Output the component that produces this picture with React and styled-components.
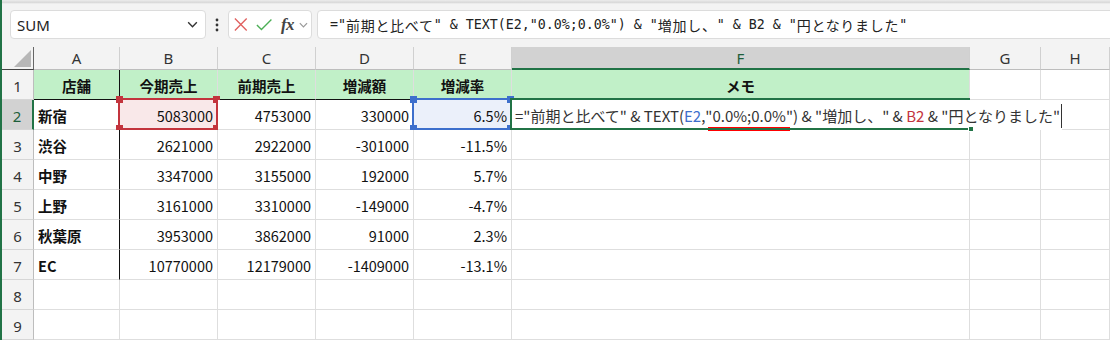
import React from 'react';
import styled, { createGlobalStyle } from 'styled-components';

const GlobalStyle = createGlobalStyle`
  html, body {
    margin: 0;
    padding: 0;
    background: #f3f3f3;
    overflow: hidden;
  }
  * { box-sizing: border-box; }
`;

const XL_GREEN = '#217346';
const CELL_FONT = `"Noto Sans CJK JP", "Noto Sans", sans-serif`;

const Window = styled.div`
  width: 1110px;
  height: 340px;
  border-left: 2px solid ${XL_GREEN};
  background: #f3f3f3;
  display: flex;
  flex-direction: column;
  overflow: hidden;
`;

const TopShade = styled.div`
  height: 4px;
  background: linear-gradient(#ececec, #d9d9d9 60%, #f3f3f3);
`;

const Toolbar = styled.div`
  height: 43px;
  display: flex;
  align-items: flex-start;
  padding: 6px 0 0 8px;
`;

const Box = styled.div`
  height: 29px;
  background: #ffffff;
  border: 1px solid #dcdcdc;
  border-radius: 4px;
  display: flex;
  align-items: center;
`;

const NameBox = styled(Box)`
  width: 196px;
  padding: 0 6px 0 6px;
  justify-content: space-between;
  font-family: "Noto Sans", "Liberation Sans", sans-serif;
  font-size: 15px;
  color: #222;
`;

const Dots = styled.div`
  width: 22px;
  height: 29px;
  display: flex;
  align-items: center;
  justify-content: center;
`;

const FuncBox = styled(Box)`
  width: 84px;
  padding: 0 2px 0 5px;
  gap: 8px;
`;

const Fx = styled.span`
  font-family: "Liberation Serif", "DejaVu Serif", serif;
  font-style: italic;
  font-weight: bold;
  font-size: 17px;
  color: #444;
  margin-left: 1px;
  margin-right: -4px;
  letter-spacing: -0.5px;
`;

const FormulaBox = styled(Box)`
  flex: 1;
  margin-left: 5px;
  margin-right: -8px;
  padding-left: 12px;
  font-family: "DejaVu Sans Mono", "Liberation Mono", "Noto Sans CJK JP", monospace;
  font-size: 13.3px;
  color: #222;
  white-space: nowrap;
`;

const Wide = styled.span`
  font-family: "Noto Sans CJK JP", sans-serif;
  font-size: 14px;
  letter-spacing: 0.7px;
`;

const Sheet = styled.div`
  display: grid;
  grid-template-columns: 32px 86px 98px 98px 98px 98px 458px 71px 1fr;
  grid-template-rows: 23px repeat(9, 30px);
  background: #ffffff;
  font-family: ${CELL_FONT};
  font-size: 14.5px;
  color: #111;
`;

const Corner = styled.div`
  background: #f3f3f3;
  border-right: 1px solid #666;
  border-bottom: 1px solid #444;
  position: relative;
`;

const Triangle = styled.div`
  position: absolute;
  right: 2px;
  bottom: 2px;
  width: 0;
  height: 0;
  border-left: 17px solid transparent;
  border-bottom: 17px solid #b7b7b7;
`;

const ColHead = styled.div`
  background: ${(p) => (p.$active ? '#d2d2d2' : '#f3f3f3')};
  color: ${(p) => (p.$active ? '#1d5e3a' : '#333')};
  border-right: 1px solid #d0d0d0;
  border-bottom: ${(p) => (p.$active ? `2px solid ${XL_GREEN}` : '1px solid #bdbdbd')};
  display: flex;
  align-items: center;
  justify-content: center;
  font-family: "Noto Sans", "Liberation Sans", sans-serif;
  font-size: 15px;
  padding-top: ${(p) => (p.$active ? '1px' : '0')};
`;

const RowHead = styled.div`
  background: ${(p) => (p.$active ? '#d2d2d2' : '#f3f3f3')};
  color: ${(p) => (p.$active ? '#1d5e3a' : '#333')};
  border-right: ${(p) => (p.$active ? `2px solid ${XL_GREEN}` : '1px solid #bdbdbd')};
  border-bottom: 1px solid #d6d6d6;
  display: flex;
  align-items: center;
  justify-content: center;
  font-family: "Noto Sans", "Liberation Sans", sans-serif;
  font-size: 15px;
  padding-top: 2px;
`;

const Cell = styled.div`
  position: relative;
  background: ${(p) => p.$fill || '#ffffff'};
  border-right: 1px solid ${(p) => (p.$edgeRight ? '#111' : '#dedede')};
  border-bottom: 1px solid ${(p) => (p.$edgeBottom ? '#111' : '#dedede')};
  display: flex;
  align-items: center;
  justify-content: ${(p) => p.$align || 'flex-start'};
  padding: 1px 4px 0 4px;
  font-weight: ${(p) => (p.$bold ? 700 : 400)};
  white-space: nowrap;
  z-index: ${(p) => (p.$raised ? 2 : 'auto')};
`;

const RefFrame = styled.div`
  position: absolute;
  left: -2px;
  top: -2px;
  right: -1px;
  bottom: -1px;
  border: 2px solid ${(p) => p.$color};
  background: ${(p) => p.$fill};
  pointer-events: none;
`;

const Handle = styled.span`
  position: absolute;
  width: 7px;
  height: 7px;
  background: ${(p) => p.$color};
  ${(p) => (p.$v === 'top' ? 'top: -4px;' : 'bottom: -4px;')}
  ${(p) => (p.$h === 'left' ? 'left: -4px;' : 'right: -4px;')}
`;

const CellValue = styled.span`
  position: relative;
  z-index: 1;
`;

const EditFrame = styled.div`
  position: absolute;
  left: -2px;
  top: -2px;
  right: -1px;
  bottom: -1px;
  border: 2px solid ${XL_GREEN};
  border-right: none;
  pointer-events: none;
  z-index: 3;
`;

const FillHandle = styled.span`
  position: absolute;
  right: -4px;
  bottom: -4px;
  width: 6px;
  height: 6px;
  background: ${XL_GREEN};
  border: 1px solid #fff;
`;

const EditText = styled.div`
  position: absolute;
  left: 0;
  top: 0;
  bottom: -1px;
  padding: 1px 0 0 3px;
  background: #ffffff;
  display: flex;
  align-items: center;
  font-size: 15px;
  font-weight: 400;
  color: #333;
  z-index: 2;
`;

const Ref = styled.span`
  color: ${(p) => p.$color};
`;

const Marked = styled.span`
  position: relative;
  &::after {
    content: '';
    position: absolute;
    left: 3px;
    right: 3px;
    bottom: -5px;
    height: 4px;
    background: #ff0000;
  }
`;

const Caret = styled.span`
  display: inline-block;
  width: 1px;
  height: 24px;
  background: #333;
  margin-left: 1px;
`;

const BLUE = '#3d6fcc';
const RED = '#c3343d';

const cols = ['A', 'B', 'C', 'D', 'E', 'F', 'G', 'H'];

const rows = [
  ['新宿', '5083000', '4753000', '330000', '6.5%'],
  ['渋谷', '2621000', '2922000', '-301000', '-11.5%'],
  ['中野', '3347000', '3155000', '192000', '5.7%'],
  ['上野', '3161000', '3310000', '-149000', '-4.7%'],
  ['秋葉原', '3953000', '3862000', '91000', '2.3%'],
  ['EC', '10770000', '12179000', '-1409000', '-13.1%'],
];

const headers = ['店舗', '今期売上', '前期売上', '増減額', '増減率', 'メモ'];

const Chevron = ({ size = 12, color = '#444' }) => (
  <svg width={size} height={size} viewBox="0 0 12 12">
    <polyline points="2,4 6,8 10,4" fill="none" stroke={color} strokeWidth="1.3" />
  </svg>
);

const RefMark = ({ color, fill }) => (
  <RefFrame $color={color} $fill={fill}>
    <Handle $color={color} $v="top" $h="left" />
    <Handle $color={color} $v="top" $h="right" />
    <Handle $color={color} $v="bottom" $h="left" />
    <Handle $color={color} $v="bottom" $h="right" />
  </RefFrame>
);

const EditingCell = () => (
  <Cell $raised $edgeBottom>
    <EditText>
      ="前期と比べて" &amp; TEXT(<Ref $color={BLUE}>E2</Ref>,<Marked>"0.0%;0.0%"</Marked>) &amp; "増加し、" &amp;{' '}
      <Ref $color={RED}>&nbsp;B2</Ref>&nbsp;&amp; "円となりました"<Caret />
    </EditText>
    <EditFrame>
      <FillHandle />
    </EditFrame>
  </Cell>
);

export default function App() {
  return (
    <>
      <GlobalStyle />
      <Window>
        <TopShade />
        <Toolbar>
          <NameBox>
            <span>SUM</span>
            <Chevron size={13} color="#333" />
          </NameBox>
          <Dots>
            <svg width="4" height="14" viewBox="0 0 4 14">
              <circle cx="2" cy="2" r="1.4" fill="#333" />
              <circle cx="2" cy="7" r="1.4" fill="#333" />
              <circle cx="2" cy="12" r="1.4" fill="#333" />
            </svg>
          </Dots>
          <FuncBox>
            <svg width="15" height="15" viewBox="0 0 15 15">
              <path d="M1 1 L14 14 M14 1 L1 14" stroke="#e0605f" strokeWidth="1.5" fill="none" />
            </svg>
            <svg width="18" height="14" viewBox="0 0 18 14">
              <polyline points="1,7 6,12 17,1" stroke="#4caf56" strokeWidth="1.5" fill="none" />
            </svg>
            <Fx>fx</Fx>
            <Chevron size={12} color="#999" />
          </FuncBox>
          <FormulaBox>
            ="<Wide>前期と比べて</Wide>" &amp; TEXT(E2,"0.0%;0.0%") &amp; "<Wide>増加し、</Wide>" &amp; B2 &amp; "<Wide>円となりました</Wide>"
          </FormulaBox>
        </Toolbar>
        <Sheet>
          <Corner>
            <Triangle />
          </Corner>
          {cols.map((c) => (
            <ColHead key={c} $active={c === 'F'}>
              {c}
            </ColHead>
          ))}

          <RowHead>1</RowHead>
          {headers.map((h, i) => (
            <Cell key={h} $fill="#c1f0c8" $bold $align="center" $edgeRight={i === 0} $edgeBottom>
              {h}
            </Cell>
          ))}
          <Cell />
          <Cell />

          {rows.map((r, ri) => {
            const n = ri + 2;
            return (
              <React.Fragment key={n}>
                <RowHead $active={n === 2}>{n}</RowHead>
                <Cell $bold $edgeRight>
                  {r[0]}
                </Cell>
                {r.slice(1).map((v, ci) => (
                  <Cell key={ci} $align="flex-end">
                    {n === 2 && ci === 0 && <RefMark color={RED} fill="#f9e8e9" />}
                    {n === 2 && ci === 3 && <RefMark color={BLUE} fill="#ebf0fa" />}
                    <CellValue>{v}</CellValue>
                  </Cell>
                ))}
                {n === 2 ? <EditingCell /> : <Cell />}
                <Cell />
                <Cell />
              </React.Fragment>
            );
          })}

          {[8, 9].map((n) => (
            <React.Fragment key={n}>
              <RowHead>{n}</RowHead>
              {cols.map((c) => (
                <Cell key={c} />
              ))}
            </React.Fragment>
          ))}
        </Sheet>
      </Window>
    </>
  );
}
